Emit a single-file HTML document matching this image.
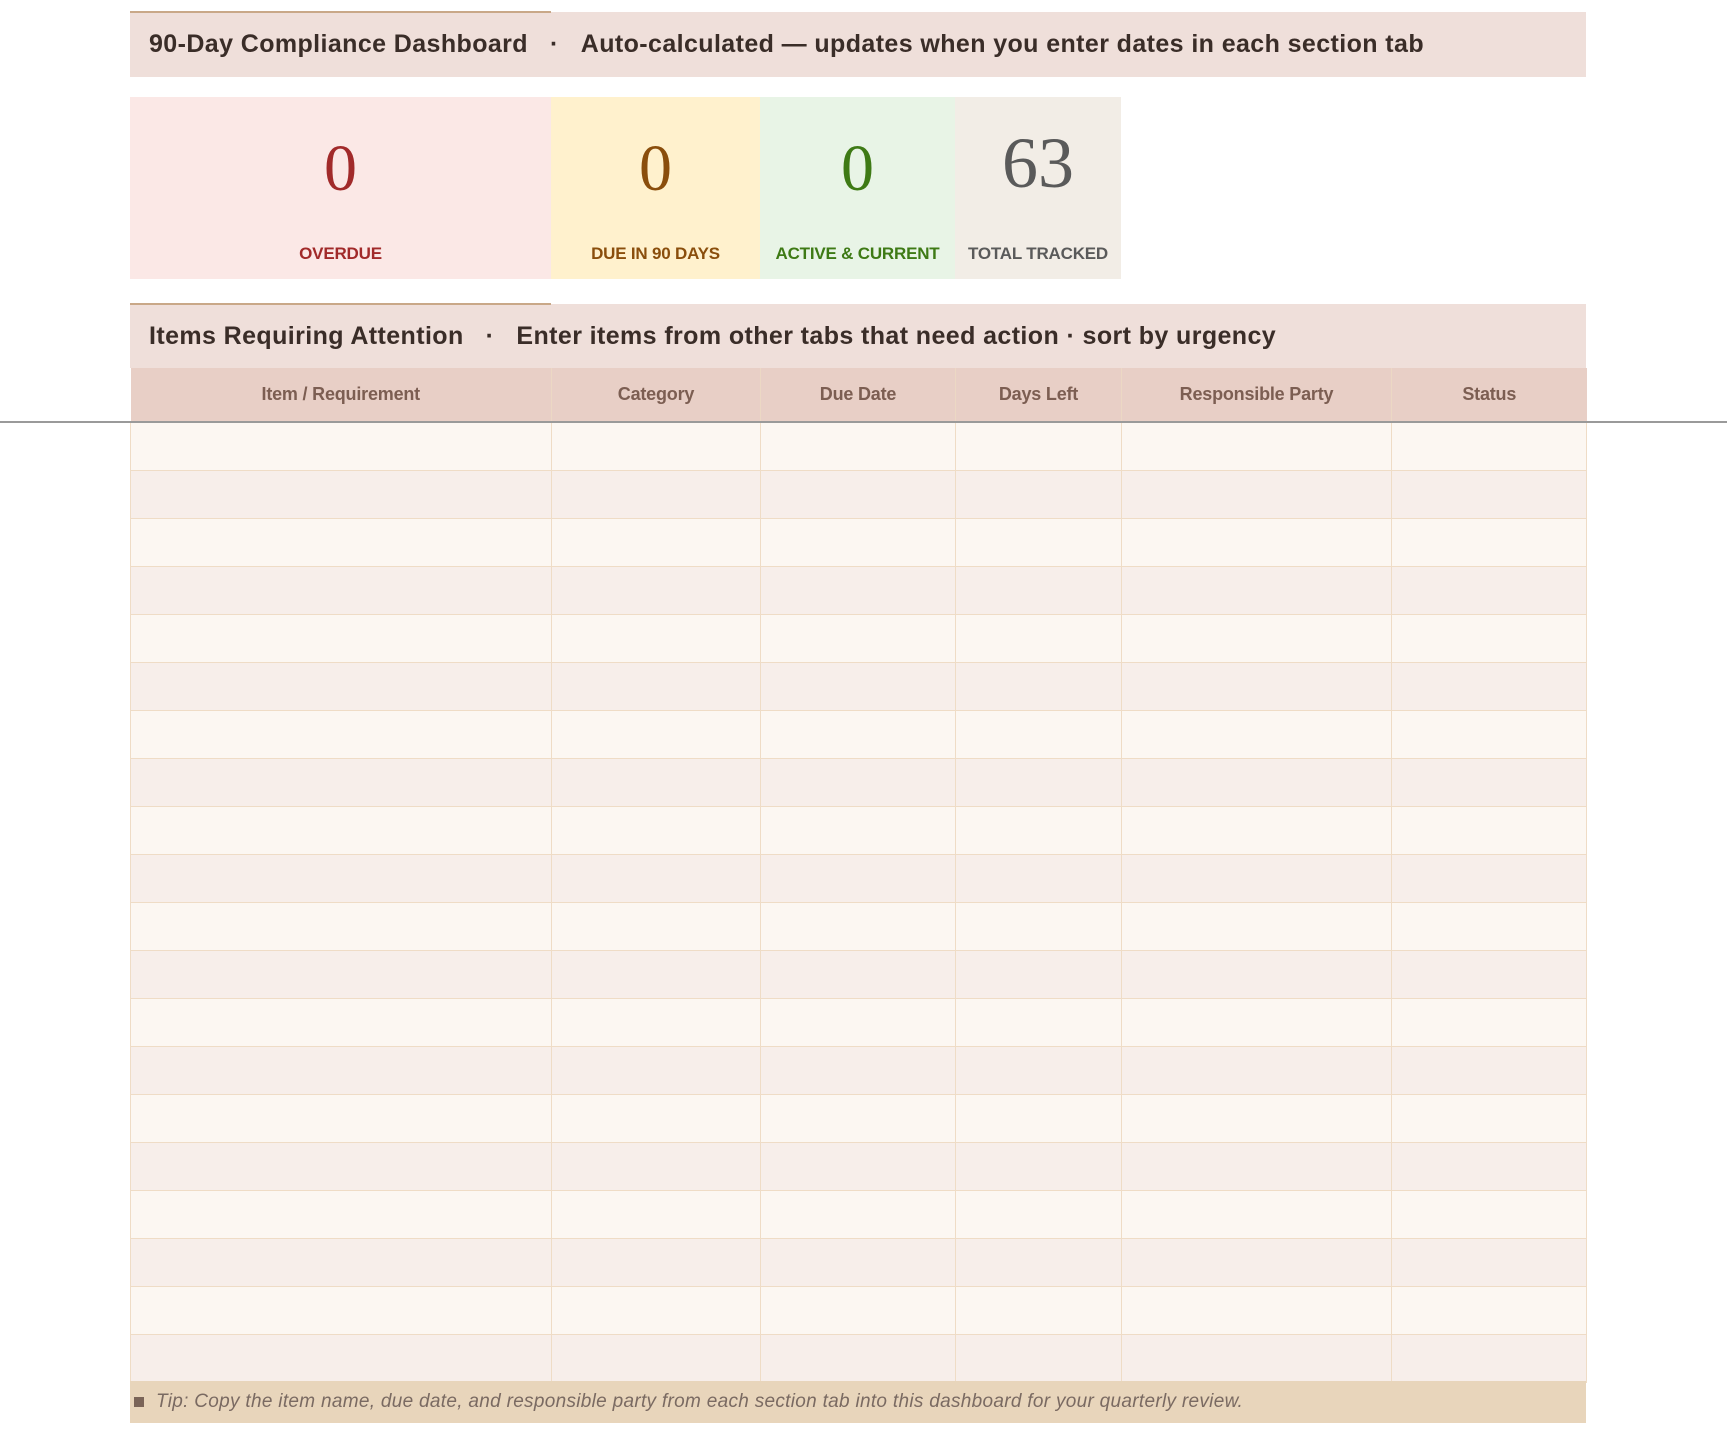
<!DOCTYPE html>
<html><head><meta charset="utf-8"><style>
*{margin:0;padding:0;box-sizing:border-box}
body{width:1727px;height:1455px;background:#fff;position:relative;font-family:"Liberation Sans",sans-serif;overflow:hidden}
.abs{position:absolute}
.band{left:130px;width:1456px;background:#efdfda;color:#3a2d28;font-weight:bold;font-size:25px;letter-spacing:0.4px;padding-left:19px;display:flex;align-items:center}
.topline{position:absolute;left:130px;width:421px;height:2px;background:#c9a888}
.card{top:97px;height:182px;text-align:center}
.card .n{position:absolute;left:0;right:0;top:37px;font-family:"Liberation Serif",serif;font-size:66px;line-height:70px}
.card .l{position:absolute;left:0;right:0;top:147px;font-weight:bold;font-size:17px;letter-spacing:-0.2px}
table{position:absolute;left:130px;top:368px;border-collapse:collapse;width:1456px;table-layout:fixed}
th{height:54px;background:#e8cfc6;color:#7c5e52;font-size:18px;font-weight:bold;border-right:1px solid #ecd8c4;letter-spacing:-0.2px}
td{height:48px;border:1px solid #efdcc6}
tr:nth-child(even) td{background:#fcf7f2}
tr:nth-child(odd) td{background:#f7eeea}
</style></head><body>
<div class="abs band" style="top:12px;height:65px">90-Day Compliance Dashboard&nbsp;&nbsp;&nbsp;·&nbsp;&nbsp;&nbsp;Auto-calculated — updates when you enter dates in each section tab</div>
<div class="topline" style="top:11px"></div>

<div class="abs card" style="left:130px;width:421px;background:#fbe8e6"><div class="n" style="color:#a12a2a">0</div><div class="l" style="color:#a12a2a">OVERDUE</div></div>
<div class="abs card" style="left:551px;width:209px;background:#fff1cd"><div class="n" style="color:#8a4e0c">0</div><div class="l" style="color:#8a4e0c">DUE IN 90 DAYS</div></div>
<div class="abs card" style="left:760px;width:195px;background:#e8f4e6"><div class="n" style="color:#3e7a15">0</div><div class="l" style="color:#3e7a15">ACTIVE &amp; CURRENT</div></div>
<div class="abs card" style="left:955px;width:166px;background:#f2ede6"><div class="n" style="color:#5a5a5a;top:31px;font-size:72px">63</div><div class="l" style="color:#5a5a5a">TOTAL TRACKED</div></div>

<div class="abs band" style="top:304px;height:64px">Items Requiring Attention&nbsp;&nbsp;&nbsp;·&nbsp;&nbsp;&nbsp;Enter items from other tabs that need action · sort by urgency</div>
<div class="topline" style="top:303px"></div>

<table>
<colgroup><col style="width:421px"><col style="width:209px"><col style="width:195px"><col style="width:166px"><col style="width:270px"><col style="width:195px"></colgroup>
<tr><th>Item / Requirement</th><th>Category</th><th>Due Date</th><th>Days Left</th><th>Responsible Party</th><th style="border-right:none">Status</th></tr>
<tr><td></td><td></td><td></td><td></td><td></td><td></td></tr>
<tr><td></td><td></td><td></td><td></td><td></td><td></td></tr>
<tr><td></td><td></td><td></td><td></td><td></td><td></td></tr>
<tr><td></td><td></td><td></td><td></td><td></td><td></td></tr>
<tr><td></td><td></td><td></td><td></td><td></td><td></td></tr>
<tr><td></td><td></td><td></td><td></td><td></td><td></td></tr>
<tr><td></td><td></td><td></td><td></td><td></td><td></td></tr>
<tr><td></td><td></td><td></td><td></td><td></td><td></td></tr>
<tr><td></td><td></td><td></td><td></td><td></td><td></td></tr>
<tr><td></td><td></td><td></td><td></td><td></td><td></td></tr>
<tr><td></td><td></td><td></td><td></td><td></td><td></td></tr>
<tr><td></td><td></td><td></td><td></td><td></td><td></td></tr>
<tr><td></td><td></td><td></td><td></td><td></td><td></td></tr>
<tr><td></td><td></td><td></td><td></td><td></td><td></td></tr>
<tr><td></td><td></td><td></td><td></td><td></td><td></td></tr>
<tr><td></td><td></td><td></td><td></td><td></td><td></td></tr>
<tr><td></td><td></td><td></td><td></td><td></td><td></td></tr>
<tr><td></td><td></td><td></td><td></td><td></td><td></td></tr>
<tr><td></td><td></td><td></td><td></td><td></td><td></td></tr>
<tr><td></td><td></td><td></td><td></td><td></td><td></td></tr>
</table>
<div class="abs" style="left:0;top:421px;width:1727px;height:2px;background:#9a9a9a"></div>

<div class="abs" style="left:130px;top:1381px;width:1456px;height:42px;background:#e8d5bb;color:#7a6a62;font-style:italic;font-size:19px;letter-spacing:0.3px;display:flex;align-items:center;padding-left:4px"><span style="display:inline-block;width:10px;height:10px;background:#7a6458;margin-right:12px"></span>Tip: Copy the item name, due date, and responsible party from each section tab into this dashboard for your quarterly review.</div>
</body></html>
